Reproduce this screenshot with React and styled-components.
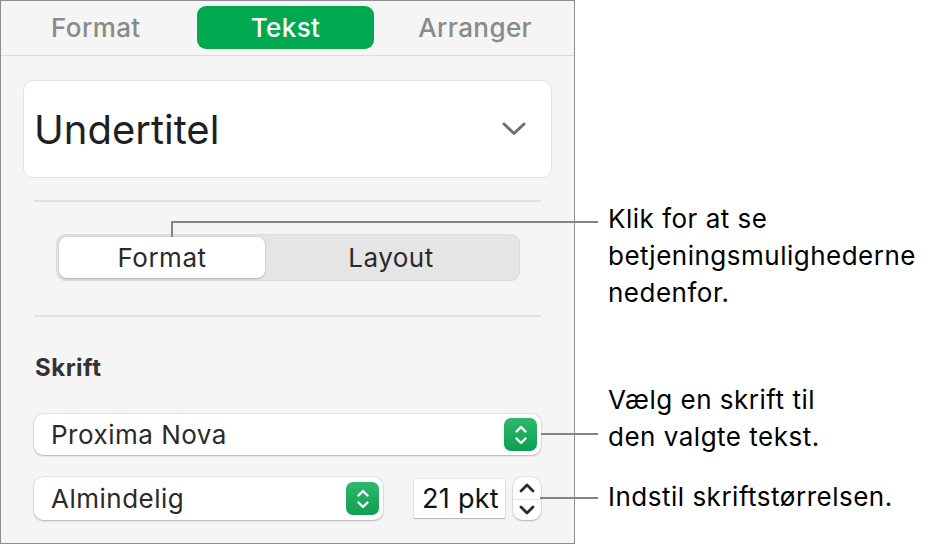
import React from 'react';
import styled, { createGlobalStyle } from 'styled-components';

const GlobalStyle = createGlobalStyle`
  html, body {
    margin: 0;
    padding: 0;
    background: #ffffff;
  }
  body {
    font-family: Inter, "Liberation Sans", sans-serif;
    -webkit-font-smoothing: antialiased;
  }
`;

const Stage = styled.div`
  position: relative;
  width: 934px;
  height: 545px;
  overflow: hidden;
`;

const Panel = styled.div`
  box-sizing: border-box;
  width: 575px;
  height: 544px;
  background: #f5f5f5;
  border: 1px solid #8e8e8e;
  display: flex;
  flex-direction: column;
`;

const TabBar = styled.div`
  display: grid;
  grid-template-columns: repeat(3, 1fr);
  column-gap: 12px;
  padding: 5px 10px 6px 6px;
  border-bottom: 1px solid #dcdcdc;
`;

const Tab = styled.div`
  height: 43px;
  display: flex;
  align-items: center;
  justify-content: center;
  border-radius: 9px;
  font-size: 26px;
  font-weight: 500;
  letter-spacing: 0.4px;
  color: ${({ $active }) => ($active ? '#ffffff' : '#8a8a8a')};
  background: ${({ $active }) => ($active ? '#00a94f' : 'transparent')};
`;

const Body = styled.div`
  display: flex;
  flex-direction: column;
  padding: 24px 33px 0 33px;
`;

const StyleBox = styled.div`
  margin: 0 -11px 0 -11px;
  height: 98px;
  box-sizing: border-box;
  background: #ffffff;
  border: 1px solid #e3e3e3;
  border-radius: 10px;
  display: flex;
  align-items: center;
  justify-content: space-between;
  padding: 0 25px 0 10px;
`;

const StyleName = styled.span`
  font-size: 40px;
  color: #1f1f1f;
`;

const Divider = styled.div`
  height: 2px;
  background: #e0e0e0;
  margin-top: ${({ $top }) => $top}px;
`;

const Segmented = styled.div`
  margin: 32px 21px 0 22px;
  height: 47px;
  box-sizing: border-box;
  background: #e5e5e5;
  border: 1px solid #dcdcdc;
  border-radius: 9px;
  padding: 2px;
  display: grid;
  grid-template-columns: 206px 1fr;
`;

const Segment = styled.div`
  display: flex;
  align-items: center;
  justify-content: center;
  font-size: 26px;
  letter-spacing: 0.5px;
  color: #2a2a2a;
  border-radius: 8px;
  background: ${({ $active }) => ($active ? '#ffffff' : 'transparent')};
  box-shadow: ${({ $active }) =>
    $active ? '0 0.5px 2px rgba(0,0,0,0.25)' : 'none'};
`;

const SectionTitle = styled.div`
  margin-top: 36px;
  font-size: 24px;
  font-weight: 700;
  letter-spacing: 0.5px;
  color: #333333;
  padding-left: 1px;
`;

const PopupRow = styled.div`
  display: flex;
  align-items: center;
  margin-top: ${({ $top }) => $top}px;
`;

const Popup = styled.div`
  box-sizing: border-box;
  width: ${({ $width }) => $width}px;
  height: ${({ $height }) => $height}px;
  background: #ffffff;
  border-radius: 9px;
  box-shadow: 0 0 0 0.5px rgba(0, 0, 0, 0.12), 0 1px 2px rgba(0, 0, 0, 0.22);
  display: flex;
  align-items: center;
  justify-content: space-between;
  padding: 0 4px 0 17px;
  font-size: 26px;
  letter-spacing: 0.5px;
  color: #2a2a2a;
`;

const GreenButton = styled.div`
  width: 33px;
  height: 33px;
  border-radius: 7px;
  background: linear-gradient(#2fb96c, #0e9f52);
  display: flex;
  align-items: center;
  justify-content: center;
`;

const SizeField = styled.div`
  box-sizing: border-box;
  margin-left: 31px;
  width: 91px;
  height: 39px;
  background: #ffffff;
  box-shadow: 0 0 0 0.5px rgba(0, 0, 0, 0.1), 0 1px 1px rgba(0, 0, 0, 0.2);
  display: flex;
  align-items: center;
  justify-content: flex-end;
  padding-right: 6px;
  font-size: 27px;
  letter-spacing: 0.3px;
  color: #111111;
`;

const Stepper = styled.div`
  box-sizing: border-box;
  margin-left: 8px;
  width: 28px;
  height: 43px;
  background: #ffffff;
  border-radius: 9px;
  box-shadow: 0 0 0 0.5px rgba(0, 0, 0, 0.12), 0 1px 2px rgba(0, 0, 0, 0.22);
  display: grid;
  grid-template-rows: 1fr 1fr;
`;

const StepHalf = styled.div`
  display: flex;
  align-items: center;
  justify-content: center;
  border-top: ${({ $lower }) => ($lower ? '1px solid #e4e4e4' : 'none')};
`;

const Line = styled.div`
  position: absolute;
  background: #858585;
`;

const Callout = styled.div`
  position: absolute;
  left: 608px;
  top: ${({ $top }) => $top}px;
  font-size: 26px;
  line-height: 37px;
  letter-spacing: 0.5px;
  color: #000000;
  white-space: nowrap;
`;

const Chevron = () => (
  <svg width="24" height="14" viewBox="0 0 24 14">
    <path
      d="M2 2 L12 11.5 L22 2"
      fill="none"
      stroke="#6e6e6e"
      strokeWidth="3"
      strokeLinecap="round"
      strokeLinejoin="round"
    />
  </svg>
);

const UpDown = () => (
  <svg width="16" height="24" viewBox="0 0 16 24">
    <path
      d="M3.5 8.5 L8 4 L12.5 8.5 M3.5 15.5 L8 20 L12.5 15.5"
      fill="none"
      stroke="#ffffff"
      strokeWidth="2.4"
      strokeLinecap="round"
      strokeLinejoin="round"
    />
  </svg>
);

const Caret = ({ down }) => (
  <svg width="18" height="12" viewBox="0 0 18 12">
    <path
      d={down ? 'M3 3 L9 9 L15 3' : 'M3 9 L9 3 L15 9'}
      fill="none"
      stroke="#2a2a2a"
      strokeWidth="2.8"
      strokeLinecap="round"
      strokeLinejoin="round"
    />
  </svg>
);

export default function App() {
  return (
    <Stage>
      <GlobalStyle />
      <Panel>
        <TabBar>
          <Tab>Format</Tab>
          <Tab $active>Tekst</Tab>
          <Tab>Arranger</Tab>
        </TabBar>
        <Body>
          <StyleBox>
            <StyleName>Undertitel</StyleName>
            <Chevron />
          </StyleBox>
          <Divider $top={22} />
          <Segmented>
            <Segment $active>Format</Segment>
            <Segment>Layout</Segment>
          </Segmented>
          <Divider $top={34} />
          <SectionTitle>Skrift</SectionTitle>
          <PopupRow $top={32}>
            <Popup $width={507} $height={41}>
              Proxima Nova
              <GreenButton>
                <UpDown />
              </GreenButton>
            </Popup>
          </PopupRow>
          <PopupRow $top={22}>
            <Popup $width={349} $height={43}>
              Almindelig
              <GreenButton>
                <UpDown />
              </GreenButton>
            </Popup>
            <SizeField>21 pkt</SizeField>
            <Stepper>
              <StepHalf>
                <Caret />
              </StepHalf>
              <StepHalf $lower>
                <Caret down />
              </StepHalf>
            </Stepper>
          </PopupRow>
        </Body>
      </Panel>

      <Line style={{ left: 171, top: 221, width: 2, height: 16 }} />
      <Line style={{ left: 171, top: 221, width: 427, height: 2 }} />
      <Line style={{ left: 541, top: 433, width: 57, height: 2 }} />
      <Line style={{ left: 540, top: 497, width: 58, height: 2 }} />

      <Callout $top={200}>
        Klik for at se
        <br />
        betjeningsmulighederne
        <br />
        nedenfor.
      </Callout>
      <Callout $top={381}>
        Vælg en skrift til
        <br />
        den valgte tekst.
      </Callout>
      <Callout $top={478}>Indstil skriftstørrelsen.</Callout>
    </Stage>
  );
}
